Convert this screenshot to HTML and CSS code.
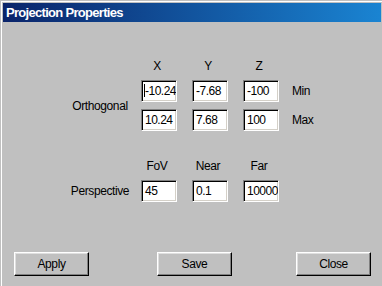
FILE: index.html
```html
<!DOCTYPE html>
<html lang="en">
<head>
    <meta charset="UTF-8">
    <title>Projection Properties</title>
    <link rel="stylesheet" href="styles.css">
</head>
<body>
    <div class="window">
        <div class="frame">
            <div class="titlebar">Projection Properties</div>

            <div class="group ortho">
                <span class="col-head first">X</span>
                <span class="col-head">Y</span>
                <span class="col-head">Z</span>
                <span class="row-label">Orthogonal</span>
                <div class="field first"><span class="caret"></span>-10.24</div>
                <div class="field">-7.68</div>
                <div class="field">-100</div>
                <span class="side-label">Min</span>
                <div class="field first">10.24</div>
                <div class="field">7.68</div>
                <div class="field">100</div>
                <span class="side-label">Max</span>
            </div>

            <div class="group persp">
                <span class="col-head first">FoV</span>
                <span class="col-head">Near</span>
                <span class="col-head">Far</span>
                <span class="row-label">Perspective</span>
                <div class="field first">45</div>
                <div class="field">0.1</div>
                <div class="field">10000</div>
            </div>

            <div class="buttons">
                <button>Apply</button>
                <button class="save">Save</button>
                <button>Close</button>
            </div>
        </div>
    </div>
</body>
</html>
```

FILE: styles.css
```css
body {
    margin: 0;
    font-family: "Liberation Sans", Arial, sans-serif;
    font-size: 12px;
    letter-spacing: -0.4px;
    color: #000;
    background: #c0c0c0;
}
.window {
    width: 382px;
    height: 286px;
    box-sizing: border-box;
    padding: 1px 0 0 1px;
    background: #c0c0c0;
}
.frame {
    height: 100%;
    box-sizing: border-box;
    border-top: 1px solid #fff;
    border-left: 1px solid #fff;
    padding: 1px 1px 0 1px;
    display: flex;
    flex-direction: column;
}
.titlebar {
    height: 19px;
    line-height: 19px;
    padding-left: 3px;
    color: #fff;
    font-weight: bold;
    font-size: 13px;
    letter-spacing: -0.7px;
    background: linear-gradient(to right, #0a246a, #1a84d2);
}
.group {
    display: grid;
    grid-template-columns: 82px 51px 51px 49px auto;
    row-gap: 7px;
    margin-left: 56px;
}
.ortho {
    margin-top: 37px;
    grid-template-rows: 14px 22px 22px;
}
.persp {
    margin-top: 28px;
    grid-template-rows: 14px 22px;
}
.first {
    grid-column: 2;
}
.col-head {
    line-height: 14px;
    width: 36px;
    padding-right: 4px;
    box-sizing: border-box;
    text-align: center;
}
.row-label {
    grid-column: 1;
    grid-row: 2;
    align-self: center;
    text-align: center;
}
.ortho .row-label {
    grid-row: 2 / 4;
}
.side-label {
    align-self: center;
}
.field {
    width: 36px;
    height: 22px;
    box-sizing: border-box;
    background: #fff;
    border: 1px solid;
    border-color: #808080 #fff #fff #808080;
    box-shadow: inset 1px 1px #000, inset -1px -1px #d4d0c8;
    padding: 0 0 0 3px;
    line-height: 20px;
    letter-spacing: -0.5px;
    white-space: nowrap;
    overflow: hidden;
}
.caret {
    display: inline-block;
    width: 1px;
    height: 13px;
    margin-left: -1px;
    background: #000;
    vertical-align: -2px;
}
.buttons {
    margin-top: auto;
    display: flex;
    justify-content: space-between;
    padding: 0 10px 10px 11px;
}
button {
    width: 75px;
    height: 24px;
    font: inherit;
    letter-spacing: inherit;
    color: #000;
    background: #c0c0c0;
    border: 1px solid;
    border-color: #fff #000 #000 #fff;
    box-shadow: inset -1px -1px #808080, inset 1px 1px #dfdfdf;
    padding: 0;
}
.save {
    margin-left: 4px;
}
```
